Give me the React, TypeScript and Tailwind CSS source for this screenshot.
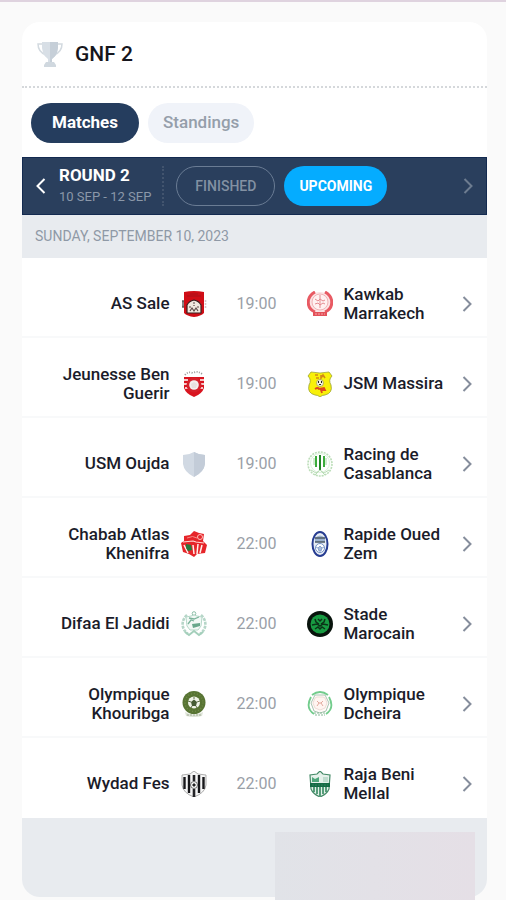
import type { ReactNode } from "react";

const CRESTS: Record<string, ReactNode> = {
  sale: (
    <>
      <path d="M2 9v8M1 11h3M1 15h3" stroke="#555" strokeWidth="1.4" strokeDasharray="2 1" />
      <path d="M24.500 9v8" stroke="#d9c5c9" strokeWidth="1.6" strokeDasharray="2 1" />
      <path d="M3 1q10-2 20 0v21q-3 3-10 4-7-1-10-4z" fill="#d00d16" />
      <path d="M6 5h14M9 3h8" stroke="#a8121a" />
      <path d="M6 22v-8q2-4 7-5 5 1 7 5v8z" fill="#f0e9df" stroke="#39201f" strokeWidth="1.2" />
      <path d="M8 16h2M12 12h2M16 16h2M9 20l2-3 2 3 2-3 2 3M13 14v1" stroke="#5c4a46" strokeWidth="1.2" fill="none" />
    </>
  ),
  kawkab: (
    <>
      <circle cx="13" cy="12" r="11" fill="#fbe3e4" />
      <path d="M8 1C-1 6-1 17 8 21M18 1c9 5 9 16 0 20" stroke="#e85a63" strokeWidth="3" fill="none" />
      <circle cx="13" cy="11" r="8" fill="#fff1f1" stroke="#f0b3b6" />
      <path d="M13 4v13M8 8l3 2 2-2 3 2 2-1M8 13l3-1 2 2 3-2 2 1" fill="none" stroke="#e58b91" />
      <path d="M6 21h14v4H6z" fill="#e35159" />
      <path d="M8 23h10" stroke="#f3a5a9" strokeDasharray="2 1" />
    </>
  ),
  guerir: (
    <>
      <path d="M4 4q3-4 8-2 5-3 10 2" fill="none" stroke="#999" strokeWidth="1.8" strokeDasharray="1 1.500" />
      <path d="M3 6h20v11q-2 6-10 9-8-3-10-9z" fill="#d9141f" />
      <path d="M3 9h4M19 9h4M3 13h3M20 13h3M4 17h3M19 17h3" stroke="#fff" strokeWidth="1.3" />
      <circle cx="13" cy="14" r="7.500" fill="#d5202a" />
      <circle cx="13" cy="14" r="4.800" fill="#f4efed" />
      <path d="M10 13l3-2 3 2-1 4h-4z" fill="#e8e0de" />
    </>
  ),
  massira: (
    <>
      <path d="M4 1q9 2 18 0l3 4q-4 4-1 9 2 8-6 10-3 0-5 2-2-2-5-2-8-2-6-10 3-5-1-9z" fill="#f8f009" stroke="#9aa334" strokeWidth=".8" />
      <path d="M8 4h3M9 7h3M14 4v3l2-3 2 3" stroke="#d28916" strokeWidth="1.6" fill="none" />
      <circle cx="13" cy="12" r="3.500" fill="#f4f1dd" stroke="#8b8748" strokeWidth=".6" />
      <path d="M11 10h1v2h-1zM14 10h1v2h-1zM12 13h2v1h-2z" fill="#24241f" />
      <path d="M8 18q3-2 4 0l5-1 1 2h-4l1 3" stroke="#df4b1c" strokeWidth="1.8" fill="none" />
    </>
  ),
  oujda: (
    <>
      <path d="M13 1q5 3 11 3v9q-1 8-11 13Q3 21 2 13V4q6 0 11-3z" fill="#d1d9e3" />
      <path d="M13 1q5 3 11 3v9q-1 8-11 13z" fill="#c3ccd8" />
    </>
  ),
  racing: (
    <>
      <circle cx="13" cy="13" r="12" fill="#fbfffb" stroke="#bcddb9" strokeWidth="1.6" strokeDasharray="2 1" />
      <circle cx="13" cy="12" r="9.500" fill="#fff" stroke="#dcefdb" />
      <path d="M9 5v11M13 4v16M17 5v11" stroke="#3cac3c" strokeWidth="2" />
      <path d="M7 7v7M19 7v7" stroke="#a4d8a2" />
      <path d="M13 4v16" stroke="#16751d" strokeWidth="1.4" />
      <path d="M4 19l5 3 4-3 4 3 5-3M8 24l5-5 5 5" stroke="#b9dcb6" fill="none" />
    </>
  ),
  khenifra: (
    <>
      <path d="M3 5l6-1 4-4 5 2 5 1-1 7 4 4-2 8-8 1-3 3-5-3-6-2-2-9 3-2z" fill="#e6252a" />
      <path d="M2 11l10-1 3 1 8 1" stroke="#ffd9d4" strokeWidth="1.2" fill="none" />
      <path d="M6 7q6-3 10 0" stroke="#f58c86" fill="none" />
      <circle cx="19" cy="6" r="2.500" fill="none" stroke="#ffbfb9" />
      <path d="M3 14l4 8M12 14l1 9M17 13l-1 10M21 14l-2 8" stroke="#fff0ec" strokeWidth="1.5" />
      <path d="M5 13l5 1 1 5-4 1-2-3z" fill="#267a3c" />
    </>
  ),
  rapide: (
    <>
      <ellipse cx="13" cy="13" rx="7.500" ry="12" fill="#e8edf5" stroke="#263c91" strokeWidth="2" />
      <path d="M8 7q5-5 10 0v4H8z" fill="#9cb2ce" />
      <path d="M8 7h10M8 11h10" stroke="#4c5964" strokeWidth="1.3" />
      <circle cx="13" cy="17" r="4.500" fill="#fff" stroke="#7191c5" />
      <path d="M13 15l2 2-1 3h-2l-1-3zM9 16l2 1M15 17l2-1" fill="#a9bddd" stroke="#7894c4" strokeWidth=".8" />
    </>
  ),
  jadidi: (
    <>
      <path d="M6 4C0 9 0 18 7 23M20 4c6 5 6 14-1 19" fill="none" stroke="#b6d6c8" strokeWidth="2.600" strokeDasharray="3 1" />
      <circle cx="13" cy="2.500" r="1.800" fill="none" stroke="#8dbfa8" />
      <path d="M5 6l5-1 3-1 3 1 5 1-1 9-3 4H9l-3-4z" fill="#f3f9f6" stroke="#b6d8c9" />
      <path d="M8 7l5 1 5-2M7 13l3-4 3 1" stroke="#7bb39b" strokeWidth="1.3" fill="none" />
      <path d="M11 13l8-1v3l-7 2z" fill="#69a88c" />
      <path d="M4 21l4 3 5-4 5 4 4-3" fill="none" stroke="#a4cfbb" strokeWidth="1.8" />
    </>
  ),
  stade: (
    <>
      <circle cx="13" cy="13" r="13" fill="#08130c" />
      <circle cx="13" cy="13" r="9.500" fill="#189b42" />
      <path d="M8 8l1 3 3 2M18 8l-1 3-3 2M5 14l5-1 3 2 3-2 5 1M8 18l3-2 2 2 2-2 3 2M11 8l2 2 2-2" stroke="#0b3217" strokeWidth="1.5" fill="none" />
    </>
  ),
  khouribga: (
    <>
      <circle cx="13" cy="11.500" r="11.500" fill="#587434" />
      <circle cx="13" cy="11.500" r="9" fill="none" stroke="#6f8947" strokeDasharray="1 2" strokeWidth="1.500" />
      <circle cx="13" cy="11.500" r="6" fill="#f0f3e9" />
      <path d="M13 8.500l3 2.500-1 4h-4l-1-4z" fill="#465c35" />
      <path d="M13 8V6M16 11l3-1M15 15l1 2M11 15l-1 2M10 11l-3-1" stroke="#607148" />
      <path d="M4 21q9 5 18 0l-1 4q-8 2-16 0z" fill="#dde3d6" />
      <path d="M6 24h14" stroke="#a3ac97" strokeDasharray="2 1" />
    </>
  ),
  dcheira: (
    <>
      <path d="M4 6Q-2 17 7 23M22 6q6 11-3 17M5 4q8-6 16 0" fill="none" stroke="#72cc8c" strokeWidth="1.8" />
      <path d="M8 4h10l4 8-3 8-6 2-6-2-3-8z" fill="#fffaf8" stroke="#a9c5b2" />
      <path d="M8 7l2-1h6l2 1 2 5-2 5-5 2-5-2-2-5z" fill="#fff5f1" stroke="#eeddd7" />
      <path d="M10 10l2 2-2 3M16 10l-2 2 2 3M12 12h2" stroke="#e2aa9e" fill="none" />
      <path d="M7 22h12M8 24h10" stroke="#8ab897" strokeWidth="1.2" strokeDasharray="2 1" />
    </>
  ),
  wydad: (
    <>
      <path d="M13 0l4 3 8 1v10q-1 8-12 12Q2 22 1 14V4l8-1z" fill="#f6f6f6" stroke="#999" strokeWidth=".8" />
      <path d="M3.500 6v12M8 4v18M18 4v18M22.500 6v12" stroke="#17171a" strokeWidth="2.400" />
      <path d="M13 4v6M13 18v8" stroke="#242427" strokeWidth="2.600" />
      <circle cx="13" cy="14" r="3.500" fill="#fff" stroke="#444" strokeWidth=".8" />
      <path d="M13 12l2 2-2 2-2-2z" fill="#222" />
    </>
  ),
  raja: (
    <>
      <path d="M13 0l3 3 7 1-1 14q-2 5-9 8-7-3-9-8L3 4l7-1z" fill="#e5f1ea" stroke="#458a67" strokeWidth="1.2" />
      <path d="M5 6l3 2 4-2v5H5z" fill="#4fa67b" />
      <path d="M16 6h5v5h-5z" fill="#bfdcce" />
      <path d="M3 12h20v4H3z" fill="#146b45" />
      <path d="M5 14h16" stroke="#2f805a" strokeDasharray="2 1" />
      <path d="M7 16v5M10 16v7M13 16v9M16 16v7M19 16v5" stroke="#31885d" strokeWidth="1.6" />
    </>
  ),
};

const MATCHES = [
  { home: "AS Sale", homeCrest: "sale", time: "19:00", away: "Kawkab Marrakech", awayCrest: "kawkab" },
  { home: "Jeunesse Ben Guerir", homeCrest: "guerir", time: "19:00", away: "JSM Massira", awayCrest: "massira" },
  { home: "USM Oujda", homeCrest: "oujda", time: "19:00", away: "Racing de Casablanca", awayCrest: "racing" },
  { home: "Chabab Atlas Khenifra", homeCrest: "khenifra", time: "22:00", away: "Rapide Oued Zem", awayCrest: "rapide" },
  { home: "Difaa El Jadidi", homeCrest: "jadidi", time: "22:00", away: "Stade Marocain", awayCrest: "stade" },
  { home: "Olympique Khouribga", homeCrest: "khouribga", time: "22:00", away: "Olympique Dcheira", awayCrest: "dcheira" },
  { home: "Wydad Fes", homeCrest: "wydad", time: "22:00", away: "Raja Beni Mellal", awayCrest: "raja" },
];

function Crest({ name }: { name: string }) {
  return (
    <svg viewBox="0 0 26 26" className="mx-[11px] size-[26px] shrink-0" fill="none" aria-hidden="true">
      {CRESTS[name]}
    </svg>
  );
}

function Chevron({ left = false }: { left?: boolean }) {
  return (
    <svg viewBox="0 0 24 24" className="size-6 shrink-0" fill="none" stroke="currentColor" strokeWidth="2" aria-hidden="true">
      <path d={left ? "M15.500 5l-7 7 7 7" : "M8.500 5l7 7-7 7"} />
    </svg>
  );
}

function Trophy() {
  return (
    <svg viewBox="0 0 26 26" className="size-[26px] shrink-0" fill="none" aria-hidden="true">
      <path d="M6 3H1q0 8 8 11M20 3h5q0 8-8 11" stroke="#d3dae0" strokeWidth="1.5" />
      <path d="M5 1h16q1 13-6 17v4h-4v-4Q4 14 5 1z" fill="#d8dfe6" />
      <path d="M13 1h8q1 13-6 17v4h-2z" fill="#c6cfd8" />
      <path d="M9 21h8l2 3v2H7v-2z" fill="#d0d8df" />
    </svg>
  );
}

export default function App() {
  return (
    <div className="relative min-h-screen overflow-hidden border-t-2 border-[#dfd3df] bg-[#fafafa] px-5 pt-5 font-['Roboto',sans-serif]">
      <main className="mr-[-1px] ml-0.5 overflow-hidden rounded-[18px] bg-white">
        <header className="flex h-[66px] items-center gap-3 border-b-2 border-dotted border-[#d5d8db] px-[15px]">
          <Trophy />
          <h1 className="text-[21px] leading-6 font-medium text-[#15151c]">GNF 2</h1>
        </header>

        <nav className="flex gap-[9px] px-[9px] pt-[15px] pb-3.5">
          <button type="button" className="h-10 rounded-full bg-[#253d5e] px-[21px] text-[17px] font-bold text-white">
            Matches
          </button>
          <button type="button" className="h-10 rounded-full bg-[#f0f3f9] px-[15px] text-[17px] font-medium text-[#959eaa]">
            Standings
          </button>
        </nav>

        <div className="flex h-[58px] items-center border border-[#132a50] bg-[#2a3f5d] px-1.5">
          <button type="button" aria-label="Previous round" className="text-white">
            <Chevron left />
          </button>
          <div className="ml-1.5 flex flex-col gap-0.5 whitespace-nowrap">
            <h2 className="text-[17px] leading-5 font-bold text-white">ROUND 2</h2>
            <p className="text-[13px] leading-5 text-[#8b98a9]">10 SEP - 12 SEP</p>
          </div>
          <div className="ml-[11px] h-10 border-l-2 border-dotted border-[#42546e]" />
          <div className="ml-3 flex gap-[9px]">
            <button type="button" className="h-10 rounded-full border border-[#6a7c94] px-[18px] text-sm font-medium text-[#8391a3]">
              FINISHED
            </button>
            <button type="button" className="h-10 rounded-full bg-[#05acff] px-[15px] text-sm font-bold text-white">
              UPCOMING
            </button>
          </div>
          <button type="button" aria-label="Next round" className="ml-auto text-[#6d7c90]">
            <Chevron />
          </button>
        </div>

        <h3 className="bg-[#e8ebef] px-[13px] py-3 text-sm leading-[19px] text-[#8f99a6]">
          SUNDAY, SEPTEMBER 10, 2023
        </h3>

        <ul>
          {MATCHES.map((match) => (
            <li key={match.home} className="border-b-2 border-[#f8f9fa] last:border-white">
              <a href="#match" className="flex min-h-[78px] items-center pt-[13px] pr-2 pl-9 text-[17px] leading-[19px]">
                <span className="flex-1 text-right font-medium text-[#1b1c2a]">{match.home}</span>
                <Crest name={match.homeCrest} />
                <time className="w-[78px] text-center text-base text-[#9aa0a7]">{match.time}</time>
                <Crest name={match.awayCrest} />
                <span className="flex-1 font-medium text-[#1b1c2a]">{match.away}</span>
                <span className="text-[#858d9c]">
                  <Chevron />
                </span>
              </a>
            </li>
          ))}
        </ul>

        <footer className="h-[79px] bg-[#e8ebef]" />
      </main>
      <div className="absolute right-[31px] bottom-0 h-[68px] w-[200px] bg-linear-to-r from-[#e1e3e8] to-[#e5dfe6]" />
    </div>
  );
}
